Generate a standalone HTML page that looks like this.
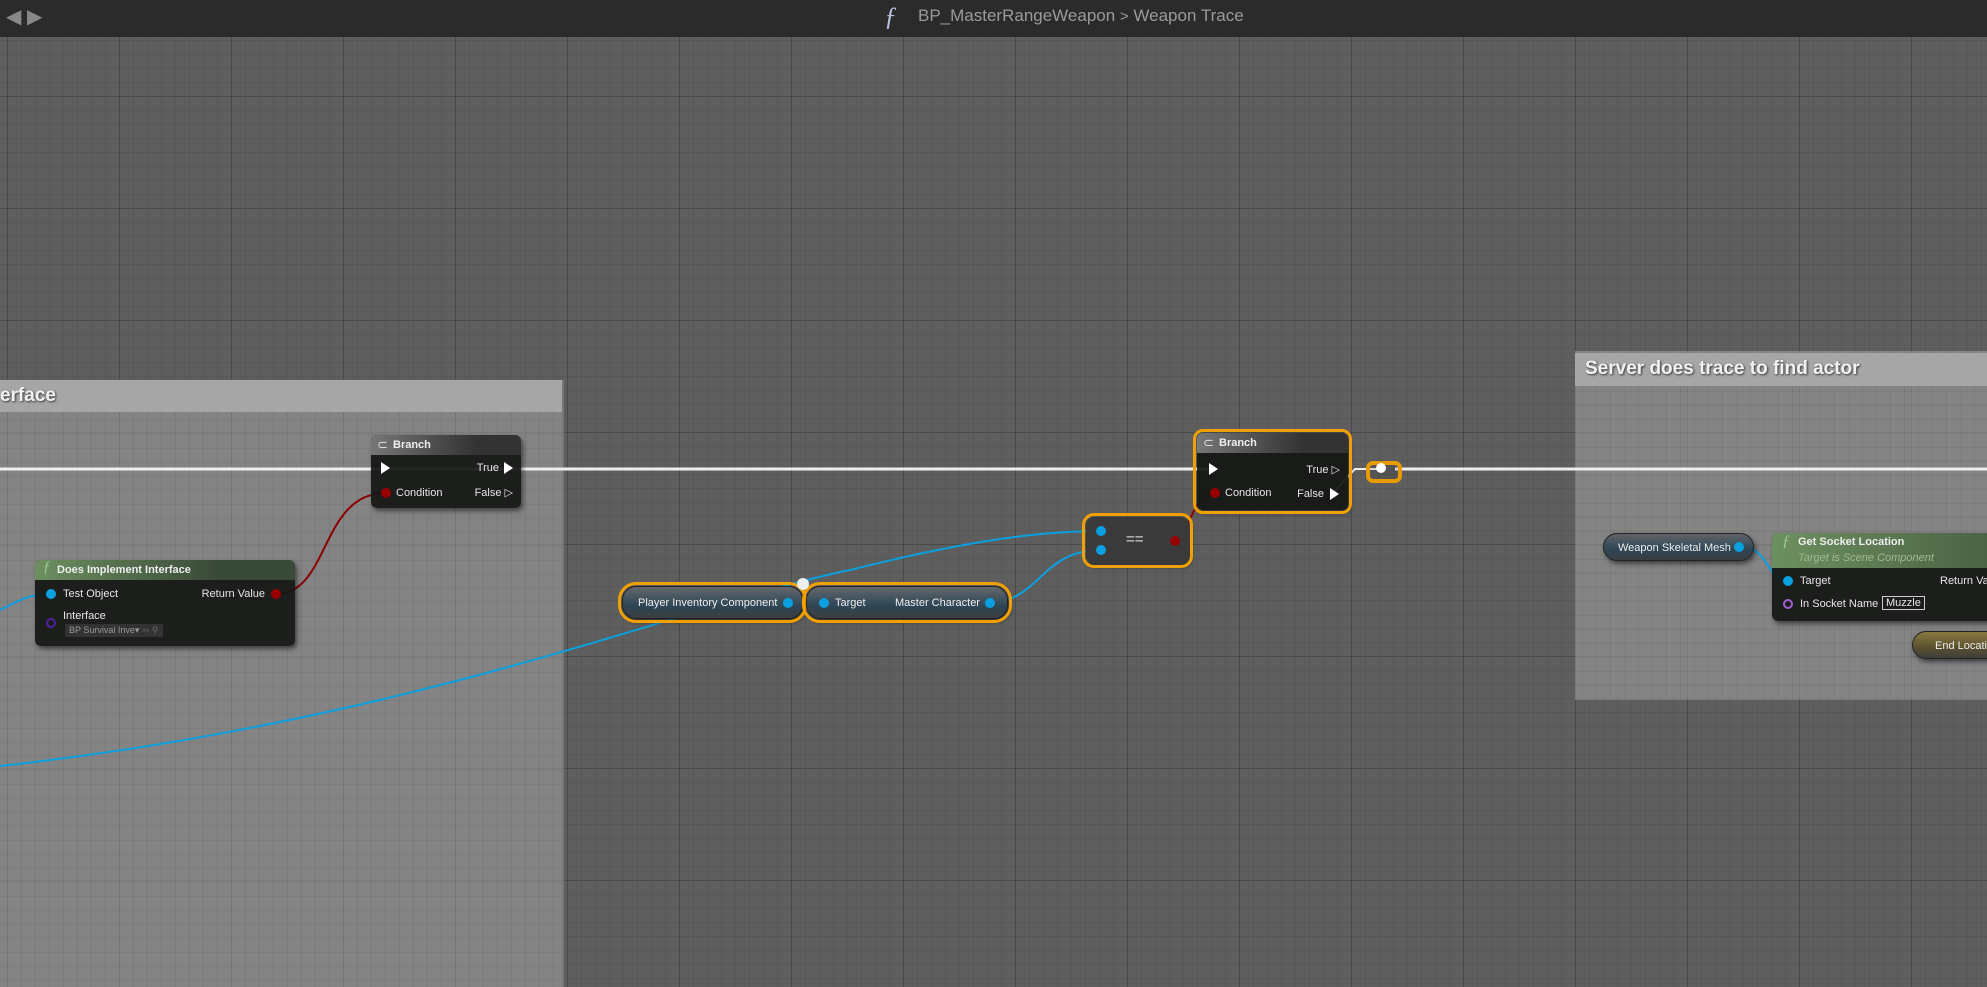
<!DOCTYPE html>
<html><head><meta charset="utf-8"><style>
*{margin:0;padding:0;box-sizing:border-box}
body{width:1987px;height:987px;overflow:hidden;position:relative;font-family:"Liberation Sans",sans-serif;
background-color:#5e5e5e;
background-image:linear-gradient(90deg,rgba(0,0,0,.16) 1px,transparent 1px),linear-gradient(0deg,rgba(0,0,0,.16) 1px,transparent 1px),linear-gradient(90deg,rgba(0,0,0,.06) 1px,transparent 1px),linear-gradient(0deg,rgba(0,0,0,.06) 1px,transparent 1px);
background-size:112px 112px,112px 112px,14px 14px,14px 14px;background-position:7px 97px,7px 97px,7px 97px,7px 97px}
.abs{position:absolute}
.top{left:0;top:0;width:1987px;height:37px;background:#2b2b2b;color:#9a9a9a;font-size:17px}
.cm{background:rgba(170,170,170,.5);background-image:linear-gradient(90deg,rgba(0,0,0,.05) 1px,transparent 1px),linear-gradient(0deg,rgba(0,0,0,.05) 1px,transparent 1px);background-size:14px 14px;background-position:7px 97px}
.cmh{background:#a6a6a6;color:#f2f2f2;font-weight:bold;font-size:19px;text-shadow:1px 1px 2px #333;padding-left:10px;line-height:32px}
.node{background:rgba(20,22,20,.92);border-radius:6px;box-shadow:2px 3px 5px rgba(0,0,0,.5);color:#e6e6e6;font-size:11px}
.sel{outline:3px solid #f0a000;outline-offset:1px}
.hdr{height:20px;border-radius:6px 6px 0 0;font-weight:bold;font-size:11px;line-height:20px;padding-left:22px;color:#eee}
.pill{border-radius:14px;background:linear-gradient(180deg,#6a6e72,#3a3e40);color:#eee;font-size:11px;box-shadow:2px 3px 5px rgba(0,0,0,.5);border:1px solid #222}
.t{position:absolute;white-space:nowrap}
.pin{position:absolute;width:10px;height:10px;border-radius:50%}
</style></head><body>
<div class="abs top">
<div class="t" style="left:6px;top:4px;color:#888;font-size:20px">◀ ▶</div>
<div class="t" style="left:884px;top:2px;color:#b8c0e0;font-size:26px;font-style:italic;font-family:'Liberation Serif',serif">ƒ</div>
<div class="t" style="left:918px;top:6px">BP_MasterRangeWeapon <span style="font-size:15px">&gt;</span> Weapon Trace</div>
</div>

<div class="abs cm" style="left:0;top:380px;width:564px;height:607px;border-right:2px solid #777"><div class="cmh" style="height:32px;padding-left:0">erface</div></div>
<div class="abs cm" style="left:1575px;top:351px;width:412px;height:349px"><div class="cmh" style="height:33px;margin-top:2px">Server does trace to find actor</div></div>

<svg class="abs" style="left:0;top:0" width="1987" height="987">
<path d="M0 469 H1210" stroke="#eee" stroke-width="3" fill="none"/>
<path d="M1395 469 H1987" stroke="#eee" stroke-width="3" fill="none"/>
<path d="M1332 494 L1355 469 H1381" stroke="#eee" stroke-width="2" fill="none"/>
<path d="M276 594 C330 594 320 493 386 493" stroke="#8a0000" stroke-width="2" fill="none"/>
<path d="M1169 540 C1190 540 1192 493 1214 493" stroke="#8a0000" stroke-width="2" fill="none"/>
<path d="M0 766 C420 720 700 600 850 570 C950 545 1030 531 1101 531" stroke="#0aa0e0" stroke-width="2" fill="none"/>
<path d="M987 603 C1040 603 1040 550 1101 550" stroke="#0aa0e0" stroke-width="2" fill="none"/>
<path d="M0 610 C20 600 30 594 51 594" stroke="#0aa0e0" stroke-width="2" fill="none"/>
<path d="M1740 547 C1770 547 1765 580 1788 580" stroke="#0aa0e0" stroke-width="2" fill="none"/>
</svg>

<!-- Branch 1 -->
<div class="abs node" style="left:371px;top:435px;width:150px;height:73px">
<div class="hdr" style="background:linear-gradient(90deg,#777,#333 70%)">Branch</div>
<div class="t" style="left:6px;top:2px;font-size:13px;color:#ddd">⊂</div>
<div class="t" style="left:10px;top:27px;width:0;height:0;border-top:6px solid transparent;border-bottom:6px solid transparent;border-left:9px solid #fff"></div>
<div class="t" style="right:22px;top:27px">True</div>
<div class="t" style="right:8px;top:27px;width:0;height:0;border-top:6px solid transparent;border-bottom:6px solid transparent;border-left:9px solid #fff"></div>
<div class="pin" style="left:10px;top:53px;background:#900"></div>
<div class="t" style="left:25px;top:52px">Condition</div>
<div class="t" style="right:8px;top:51px">False ▷</div>
</div>

<!-- DII -->
<div class="abs node" style="left:35px;top:560px;width:260px;height:86px">
<div class="hdr" style="background:linear-gradient(90deg,#6d9060,#3a4a38 70%)">Does Implement Interface</div>
<div class="t" style="left:8px;top:-1px;color:#9c9;font-style:italic;font-size:15px;font-family:'Liberation Serif',serif">ƒ</div>
<div class="pin" style="left:11px;top:29px;background:#0aa0e0"></div>
<div class="t" style="left:28px;top:28px">Test Object</div>
<div class="t" style="right:30px;top:28px">Return Value</div>
<div class="pin" style="right:14px;top:29px;background:#900"></div>
<div class="t" style="left:28px;top:50px">Interface</div>
<div class="pin" style="left:11px;top:58px;border:2px solid #5020a0"></div>
<div class="t" style="left:30px;top:64px;background:#333;color:#999;font-size:9px;padding:1px 4px">BP Survival Inve▾ <span style="color:#666">⇦ ⚲</span></div>
</div>

<!-- Player inventory -->
<div class="abs pill sel" style="left:622px;top:586px;width:181px;height:33px;border-radius:14px;background:linear-gradient(180deg,#64686c,#2e4656 60%,#3a3e40)"><div class="t" style="left:15px;top:10px">Player Inventory Component</div><div class="pin" style="right:9px;top:11px;background:#0aa0e0"></div></div>
<div class="abs pill sel" style="left:806px;top:586px;width:202px;height:33px;background:linear-gradient(180deg,#64686c,#2e4656 60%,#3a3e40)"><div class="pin" style="left:12px;top:11px;background:#0aa0e0"></div><div class="t" style="left:28px;top:10px">Target</div><div class="t" style="left:88px;top:10px">Master Character</div><div class="pin" style="right:12px;top:11px;background:#0aa0e0"></div></div>
<div class="abs" style="left:797px;top:578px;width:12px;height:12px;border-radius:50%;background:#eee"></div>

<!-- == -->
<div class="abs node sel" style="left:1086px;top:517px;width:103px;height:47px;background:#3a3a3a;border-radius:8px">
<div class="pin" style="left:10px;top:9px;background:#0aa0e0"></div>
<div class="pin" style="left:10px;top:28px;background:#0aa0e0"></div>
<div class="t" style="left:40px;top:14px;color:#aaa;font-weight:bold;font-size:15px">==</div>
<div class="pin" style="right:9px;top:19px;background:#900"></div>
</div>

<!-- Branch 2 -->
<div class="abs node sel" style="left:1197px;top:433px;width:151px;height:77px">
<div class="hdr" style="background:linear-gradient(90deg,#777,#333 70%)">Branch</div>
<div class="t" style="left:6px;top:2px;font-size:13px;color:#ddd">⊂</div>
<div class="t" style="left:12px;top:30px;width:0;height:0;border-top:6px solid transparent;border-bottom:6px solid transparent;border-left:9px solid #fff"></div>
<div class="t" style="right:8px;top:30px">True ▷</div>
<div class="pin" style="left:13px;top:55px;background:#900"></div>
<div class="t" style="left:28px;top:54px">Condition</div>
<div class="t" style="right:24px;top:55px">False</div>
<div class="t" style="right:9px;top:55px;width:0;height:0;border-top:6px solid transparent;border-bottom:6px solid transparent;border-left:9px solid #fff"></div>
</div>

<!-- reroute -->
<div class="abs" style="left:1366px;top:461px;width:36px;height:22px;border:4px solid #e89a00;border-radius:7px;background:rgba(0,0,0,.1)"></div>
<div class="abs" style="left:1376px;top:463px;width:10px;height:10px;border-radius:50%;background:#fff"></div>

<!-- right -->
<div class="abs pill" style="left:1603px;top:533px;width:151px;height:28px;background:linear-gradient(180deg,#606468,#2e4656 60%,#3a3e40)"><div class="t" style="left:14px;top:8px">Weapon Skeletal Mesh</div><div class="pin" style="right:9px;top:8px;background:#0aa0e0"></div></div>
<div class="abs node" style="left:1772px;top:533px;width:230px;height:88px">
<div class="hdr" style="background:linear-gradient(90deg,#6d9060,#4a6044);height:35px;padding-top:1px;line-height:16px;padding-left:26px">Get Socket Location<br><span style="font-weight:normal;font-style:italic;color:#a4b88e;font-size:11px">Target is Scene Component</span></div>
<div class="t" style="left:10px;top:0;color:#9c9;font-style:italic;font-size:16px;font-family:'Liberation Serif',serif">ƒ</div>
<div class="pin" style="left:11px;top:43px;background:#0aa0e0"></div>
<div class="t" style="left:28px;top:42px">Target</div>
<div class="t" style="left:168px;top:42px">Return Va</div>
<div class="pin" style="left:11px;top:66px;border:2px solid #a060d0"></div>
<div class="t" style="left:28px;top:65px">In Socket Name</div>
<div class="t" style="left:110px;top:63px;border:1px solid #ccc;padding:0 3px">Muzzle</div>
</div>
<div class="abs pill" style="left:1912px;top:631px;width:90px;height:28px;background:linear-gradient(180deg,#8a7a40,#5a5030 60%,#3e3e3a)"><div class="t" style="left:22px;top:8px">End Location</div></div>
</body></html>
